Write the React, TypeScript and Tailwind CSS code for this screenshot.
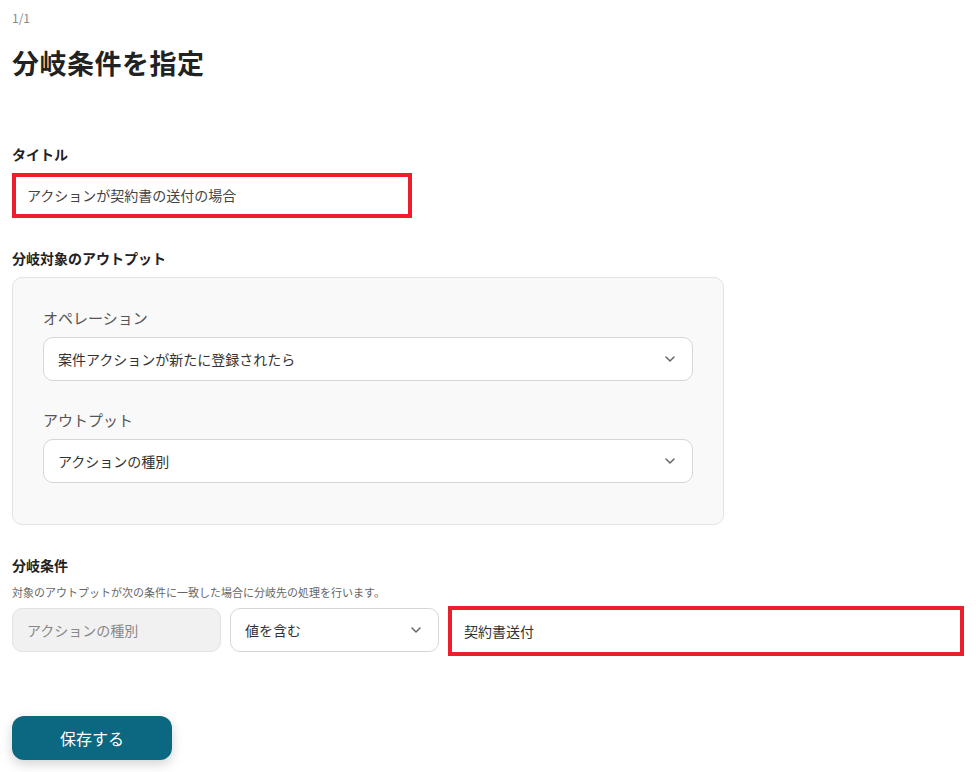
import { ChevronDown } from "lucide-react";

const font = { fontFamily: '"Noto Sans CJK JP", "Noto Sans", sans-serif' };

function Select({ value }: { value: string }) {
  return (
    <div className="h-[44px] flex items-center justify-between rounded-[10px] border border-[#d4d6dc] bg-white pl-[14px] pr-[14px] text-[14px] text-[#333]">
      <span>{value}</span>
      <ChevronDown className="w-4 h-4 text-[#666]" strokeWidth={2.2} />
    </div>
  );
}

export default function App() {
  return (
    <div className="min-h-[772px] bg-white px-3 pt-[8px] text-[#222]" style={font}>
      <div className="text-[12px] text-[#888] leading-[20px]">1/1</div>
      <h1 className="mt-[17px] text-[27px] font-bold leading-[36px] tracking-[0.5px]">分岐条件を指定</h1>

      <div className="mt-[63px] text-[14px] font-bold leading-[20px]">タイトル</div>
      <div className="mt-[9px] w-[400px] h-[45px] border-[4px] border-[#ea1f29] flex items-center pl-[11px] text-[14px] text-[#444]">
        アクションが契約書の送付の場合
      </div>

      <div className="mt-[30px] text-[14px] font-bold leading-[20px]">分岐対象のアウトプット</div>
      <div className="mt-[9px] w-[712px] h-[248px] rounded-[10px] border border-[#e2e2e6] bg-[#f9f9f9] px-[30px] pt-[29px]">
        <div className="text-[15px] text-[#555] leading-[22px]">オペレーション</div>
        <div className="mt-[8px]">
          <Select value="案件アクションが新たに登録されたら" />
        </div>
        <div className="mt-[28px] text-[15px] text-[#555] leading-[22px]">アウトプット</div>
        <div className="mt-[8px]">
          <Select value="アクションの種別" />
        </div>
      </div>

      <div className="mt-[30px] text-[14px] font-bold leading-[20px]">分岐条件</div>
      <div className="mt-[9px] text-[11px] text-[#666] leading-[16px]">対象のアウトプットが次の条件に一致した場合に分岐先の処理を行います。</div>
      <div className="mt-[6px] flex items-start gap-[9px]">
        <div className="w-[209px] h-[44px] rounded-[10px] border border-[#e2e2e6] bg-[#f1f1f1] flex items-center pl-[14px] text-[14px] text-[#888] mt-[2px]">
          アクションの種別
        </div>
        <div className="w-[209px] mt-[2px]">
          <Select value="値を含む" />
        </div>
        <div className="w-[516px] h-[50px] border-[4px] border-[#ea1f29] flex items-center pl-[12px] text-[14px] text-[#333]">
          契約書送付
        </div>
      </div>

      <button
        type="button"
        className="mt-[60px] w-[160px] h-[44px] rounded-[12px] bg-[#0b6880] text-white text-[16px] shadow-[0_4px_12px_rgba(0,0,0,0.18)]"
      >
        保存する
      </button>
    </div>
  );
}
